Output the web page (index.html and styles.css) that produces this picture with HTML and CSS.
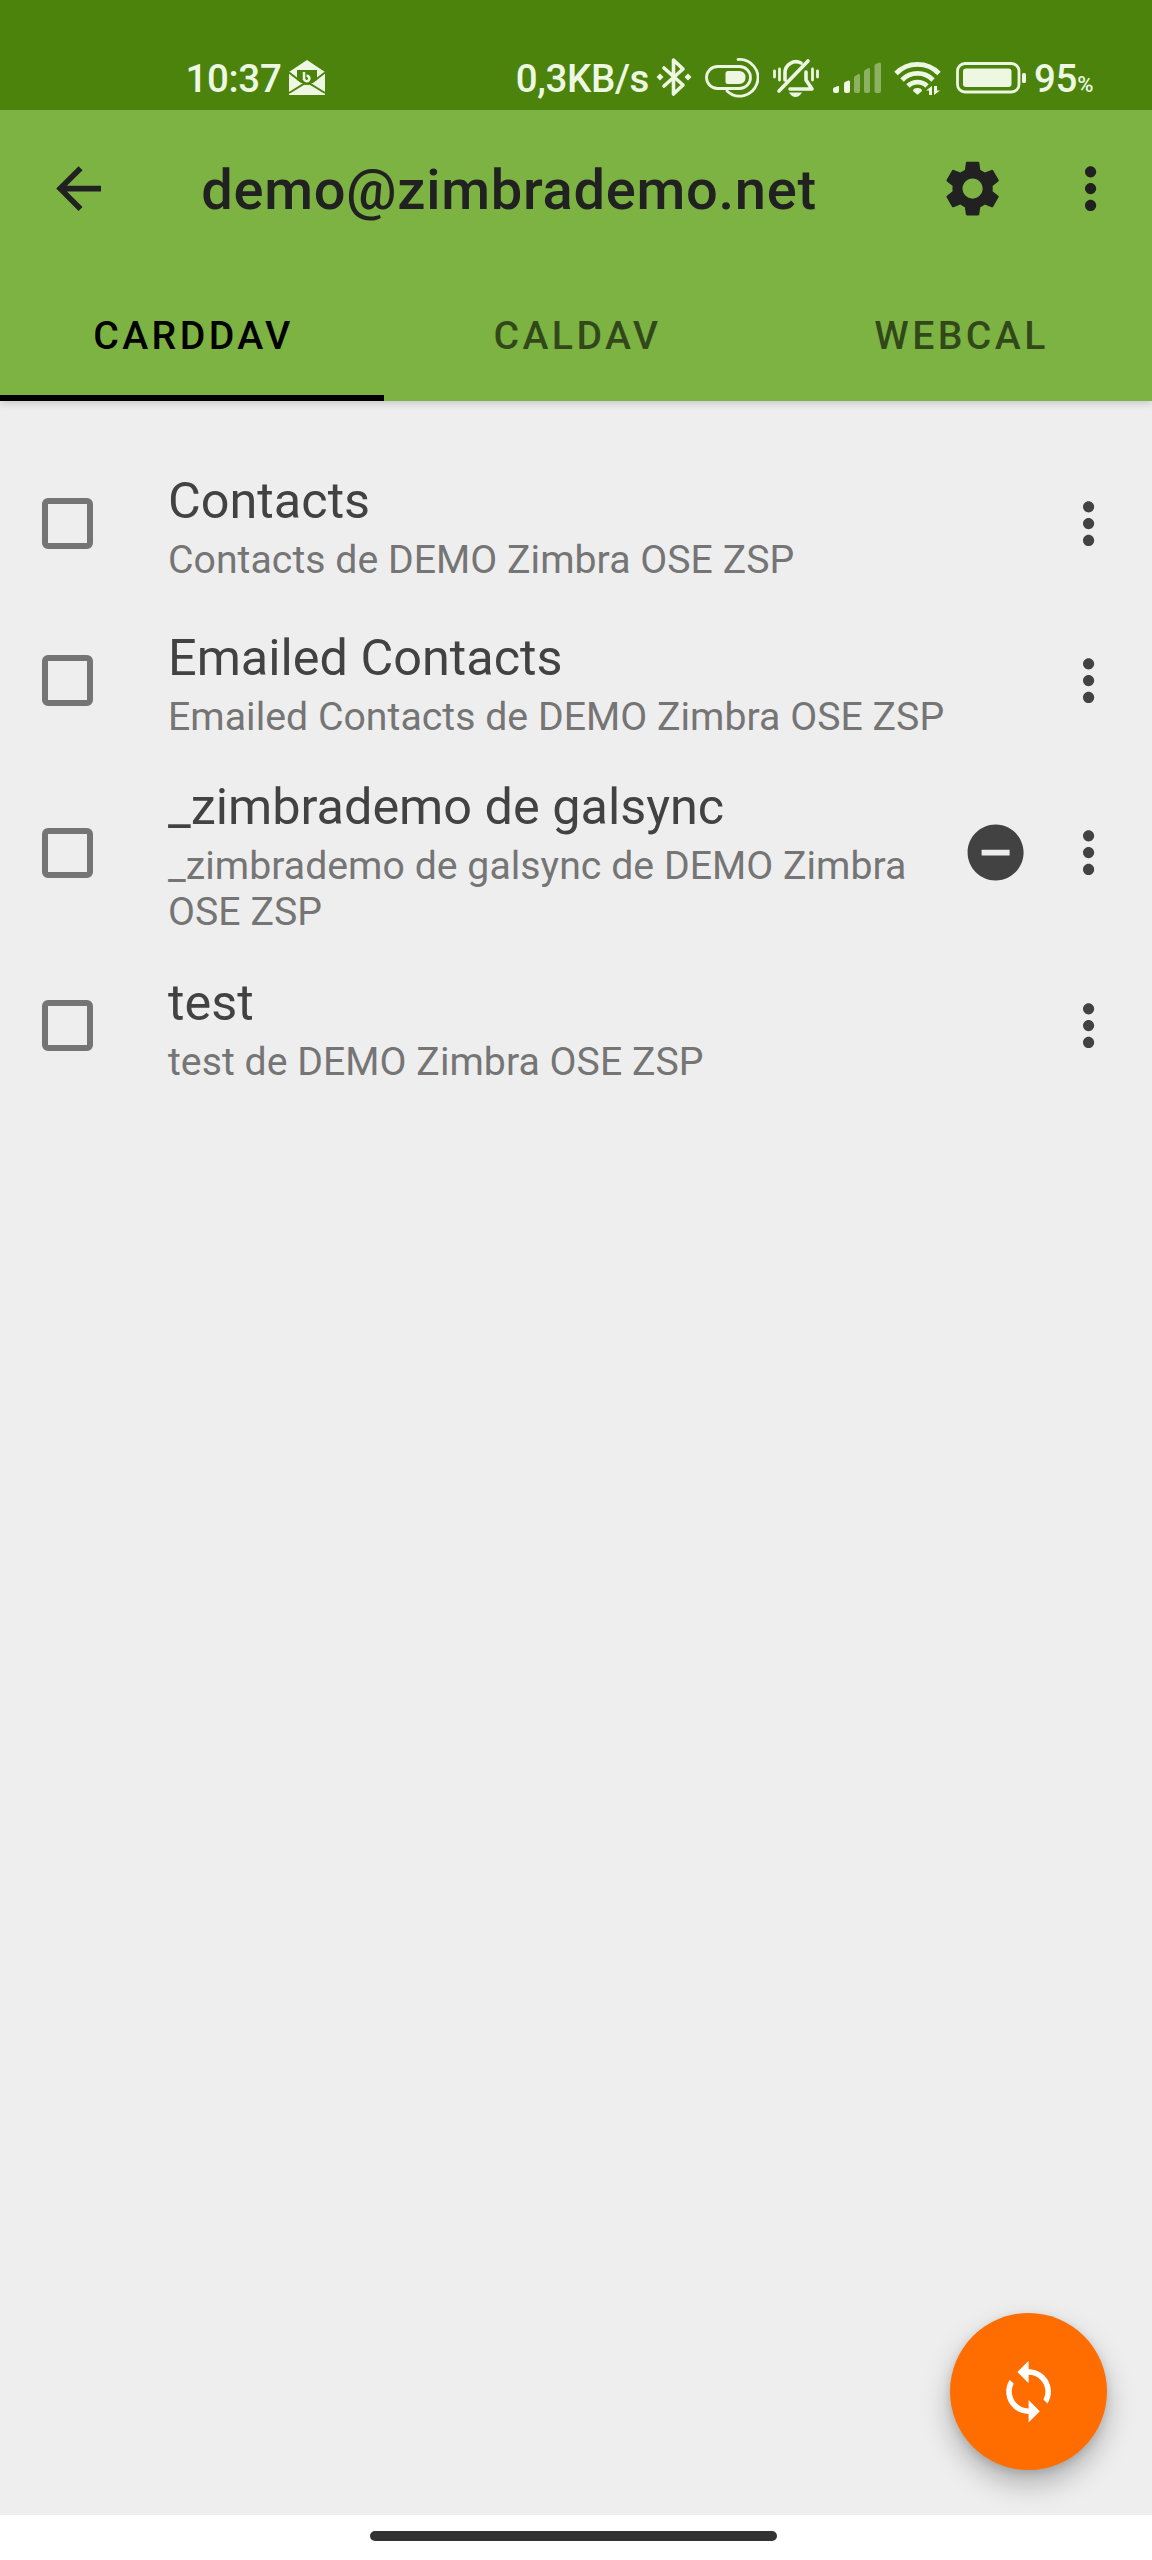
FILE: index.html
```html
<!DOCTYPE html>
<html lang="en">
<head>
  <meta charset="UTF-8">
  <meta name="viewport" content="width=device-width, initial-scale=1.0">
  <title>demo@zimbrademo.net</title>
  <link rel="stylesheet" href="styles.css">
</head>
<body>
  <!-- Status bar -->
  <div class="status-bar">
    <div class="status-left">
      <span class="status-time">10:37</span>
      <svg class="icon-mail" width="38" height="36" viewBox="0 0 38 36" fill="currentColor">
        <path d="M19 0L37 12V35H1V12Z"/>
        <path class="cut" d="M9 10H29V20L19 26L9 20Z"/>
        <path class="cut-line" d="M1 12.500L14 22.500M37 12.500L24 22.500M1 33L19 22L37 33"/>
        <path d="M7 34L19 24.500L31 34Z"/>
        <path class="letter-mark" d="M16 12V20M16 18.500A2.700 2.700 0 1 0 18.500 15.800"/>
      </svg>
    </div>
    <div class="status-right">
      <span class="status-speed">0,3KB/s</span>
      <svg class="icon-bluetooth" width="36" height="40" viewBox="0 0 36 40">
        <path class="line" d="M8 11L27 28L17.500 37V3L27 12L8 29"/>
        <path d="M4 16.500L7.500 20L4 23.500L0.500 20ZM32 16.500L35.500 20L32 23.500L28.500 20Z" fill="currentColor"/>
      </svg>
      <svg class="icon-toggle" width="54" height="40" viewBox="0 0 54 40">
        <rect class="thin" x="1.500" y="8.500" width="44" height="22" rx="11"/>
        <path class="thin" d="M33 1.500A18.300 18.300 0 1 1 22 33"/>
        <path d="M23 13H34Q40.500 13 40.500 19.500T34 26H23Q20.500 26 20.500 23.500V15.500Q20.500 13 23 13Z" fill="currentColor"/>
      </svg>
      <svg class="icon-bell" width="46" height="40" viewBox="0 0 46 40">
        <path class="line" d="M12 22V15A11 11 0 0 1 28 5M33 14V22L39 31H17M6 33L35 3"/>
        <path class="thin" d="M1.500 13V19M6.500 11V22M39.500 11V22M44.500 13V19"/>
        <path d="M16 34.500H29Q26 39 22.500 39T16 34.500Z" fill="currentColor"/>
      </svg>
      <svg class="icon-signal" width="50" height="32" viewBox="0 0 50 32" fill="currentColor">
        <path d="M1 27Q1 26 2 25.500L6 24Q7 23.500 7 25V29Q7 31 5 31H3Q1 31 1 29ZM12 22Q12 20.500 13 20L16.500 18.500Q18 18 18 20V29Q18 31 16 31H14Q12 31 12 29Z"/>
        <path class="faded" d="M22 16Q22 14.500 23 14L26.500 12Q28 11.500 28 13.500V29Q28 31 26 31H24Q22 31 22 29ZM32 10Q32 8.500 33 8L36.500 6Q38 5.500 38 7.500V29Q38 31 36 31H34Q32 31 32 29ZM42.500 4Q42.500 2.500 43.500 2L47.500 0.500Q49 0 49 2V29Q49 31 47 31H44.500Q42.500 31 42.500 29Z"/>
      </svg>
      <svg class="icon-wifi" width="48" height="36" viewBox="0 0 48 36">
        <path class="wave" d="M2 13.500A30 30 0 0 1 45 13.500M8 20A21.500 21.500 0 0 1 39 20M14 26A13.500 13.500 0 0 1 33 26"/>
        <path d="M19 31Q19 28 23.500 28T28 31L24.500 34Q23.500 35 22.500 34Z" fill="currentColor"/>
        <path d="M32 30.500L38 26V35H35V30.500ZM40 26V35L46 30.500H43V26Z" fill="currentColor"/>
      </svg>
      <svg class="icon-battery" width="72" height="32" viewBox="0 0 72 32">
        <rect class="thin" x="1.500" y="1.500" width="61.500" height="28.500" rx="7.500"/>
        <rect x="7" y="6.500" width="48.500" height="18.500" rx="3" fill="currentColor"/>
        <rect x="66" y="11" width="4" height="10" rx="1.500" fill="currentColor"/>
      </svg>
      <span class="status-battery">95<small>%</small></span>
    </div>
  </div>

  <!-- Toolbar and tabs -->
  <header class="app-bar">
    <div class="toolbar">
      <svg class="icon back" viewBox="0 0 24 24"><path d="M20 11H7.830l5.590-5.590L12 4l-8 8 8 8 1.410-1.410L7.830 13H20v-2z"/></svg>
      <h1 class="toolbar-title">demo@zimbrademo.net</h1>
      <svg class="icon settings" viewBox="0 0 24 24"><path d="M19.140 12.940c.04-.3.06-.61.06-.94 0-.32-.02-.64-.07-.94l2.030-1.580c.18-.14.23-.41.12-.61l-1.920-3.320c-.12-.22-.37-.29-.59-.22l-2.390.96c-.5-.38-1.030-.7-1.620-.94l-.36-2.540c-.04-.24-.24-.41-.48-.41h-3.840c-.24 0-.43.17-.47.41l-.36 2.540c-.59.24-1.130.57-1.620.94l-2.390-.96c-.22-.08-.47 0-.59.22L2.740 8.870c-.12.21-.08.47.12.61l2.030 1.580c-.05.3-.09.63-.09.94s.02.64.07.94l-2.030 1.580c-.18.14-.23.41-.12.61l1.920 3.320c.12.22.37.29.59.22l2.390-.96c.5.38 1.030.7 1.620.94l.36 2.540c.05.24.24.41.48.41h3.840c.24 0 .44-.17.47-.41l.36-2.540c.59-.24 1.130-.56 1.620-.94l2.390.96c.22.08.47 0 .59-.22l1.920-3.320c.12-.22.07-.47-.12-.61l-2.010-1.580zM12 15.600c-1.980 0-3.600-1.620-3.600-3.600s1.620-3.600 3.600-3.600 3.600 1.620 3.600 3.600-1.620 3.600-3.600 3.600z"/></svg>
      <svg class="icon more" viewBox="0 0 24 24"><path d="M12 8c1.100 0 2-.9 2-2s-.9-2-2-2-2 .9-2 2 .9 2 2 2zm0 2c-1.100 0-2 .9-2 2s.9 2 2 2 2-.9 2-2-.9-2-2-2zm0 6c-1.100 0-2 .9-2 2s.9 2 2 2 2-.9 2-2-.9-2-2-2z"/></svg>
    </div>
    <nav class="tabs">
      <a class="tab active">CARDDAV</a>
      <a class="tab">CALDAV</a>
      <a class="tab">WEBCAL</a>
    </nav>
  </header>

  <!-- Address books -->
  <main class="content">
    <ul class="collections">
      <li class="collection">
        <input type="checkbox" class="sync-check">
        <div class="collection-text">
          <h2>Contacts</h2>
          <p>Contacts de DEMO Zimbra OSE ZSP</p>
        </div>
        <svg class="icon" viewBox="0 0 24 24"><path d="M12 8c1.100 0 2-.9 2-2s-.9-2-2-2-2 .9-2 2 .9 2 2 2zm0 2c-1.100 0-2 .9-2 2s.9 2 2 2 2-.9 2-2-.9-2-2-2zm0 6c-1.100 0-2 .9-2 2s.9 2 2 2 2-.9 2-2-.9-2-2-2z"/></svg>
      </li>
      <li class="collection">
        <input type="checkbox" class="sync-check">
        <div class="collection-text">
          <h2>Emailed Contacts</h2>
          <p>Emailed Contacts de DEMO Zimbra OSE ZSP</p>
        </div>
        <svg class="icon" viewBox="0 0 24 24"><path d="M12 8c1.100 0 2-.9 2-2s-.9-2-2-2-2 .9-2 2 .9 2 2 2zm0 2c-1.100 0-2 .9-2 2s.9 2 2 2 2-.9 2-2-.9-2-2-2zm0 6c-1.100 0-2 .9-2 2s.9 2 2 2 2-.9 2-2-.9-2-2-2z"/></svg>
      </li>
      <li class="collection">
        <input type="checkbox" class="sync-check">
        <div class="collection-text">
          <h2>_zimbrademo de galsync</h2>
          <p>_zimbrademo de galsync de DEMO Zimbra OSE ZSP</p>
        </div>
        <svg class="icon read-only" viewBox="0 0 24 24"><path d="M12 2C6.480 2 2 6.480 2 12s4.480 10 10 10 10-4.480 10-10S17.520 2 12 2zm5 11H7v-2h10v2z"/></svg>
        <svg class="icon" viewBox="0 0 24 24"><path d="M12 8c1.100 0 2-.9 2-2s-.9-2-2-2-2 .9-2 2 .9 2 2 2zm0 2c-1.100 0-2 .9-2 2s.9 2 2 2 2-.9 2-2-.9-2-2-2zm0 6c-1.100 0-2 .9-2 2s.9 2 2 2 2-.9 2-2-.9-2-2-2z"/></svg>
      </li>
      <li class="collection">
        <input type="checkbox" class="sync-check">
        <div class="collection-text">
          <h2>test</h2>
          <p>test de DEMO Zimbra OSE ZSP</p>
        </div>
        <svg class="icon" viewBox="0 0 24 24"><path d="M12 8c1.100 0 2-.9 2-2s-.9-2-2-2-2 .9-2 2 .9 2 2 2zm0 2c-1.100 0-2 .9-2 2s.9 2 2 2 2-.9 2-2-.9-2-2-2zm0 6c-1.100 0-2 .9-2 2s.9 2 2 2 2-.9 2-2-.9-2-2-2z"/></svg>
      </li>
    </ul>

    <button class="fab" aria-label="Synchronize">
      <svg class="icon" viewBox="0 0 24 24"><path d="M12 4V1L8 5l4 4V6c3.310 0 6 2.690 6 6 0 1.010-.25 1.970-.7 2.800l1.460 1.460C19.540 15.030 20 13.570 20 12c0-4.420-3.580-8-8-8zm0 14c-3.310 0-6-2.690-6-6 0-1.010.25-1.970.7-2.800L5.240 7.740C4.460 8.970 4 10.430 4 12c0 4.420 3.580 8 8 8v3l4-4-4-4v3z"/></svg>
    </button>
  </main>

  <!-- Gesture navigation -->
  <div class="nav-bar">
    <div class="nav-handle"></div>
  </div>
</body>
</html>
```
FILE: styles.css
```css
* {
  box-sizing: border-box;
}

body {
  margin: 0;
  width: 1152px;
  height: 2560px;
  display: flex;
  flex-direction: column;
  font-family: Roboto, sans-serif;
  background-color: #eeeeee;
}

h1, h2, p, ul {
  margin: 0;
  padding: 0;
}

svg {
  display: block;
  flex: none;
}

.icon {
  width: 67.2px;
  height: 67.2px;
  fill: currentColor;
}

/* Status bar */
.status-bar {
  position: relative;
  z-index: 1;
  height: 110px;
  padding: 46px 59px 0 185.500px;
  display: flex;
  justify-content: space-between;
  background-color: #4b830d;
  color: #eef7e2;
  font-size: 38.500px;
  font-weight: 500;
  line-height: 66px;
}

.status-left,
.status-right {
  height: 64px;
  display: flex;
  align-items: flex-start;
}

.status-time,
.status-speed {
  letter-spacing: -0.350px;
}

.status-bar .line {
  fill: none;
  stroke: currentColor;
  stroke-width: 3.600;
  stroke-linejoin: round;
  stroke-linecap: round;
}

.status-bar .thin {
  fill: none;
  stroke: currentColor;
  stroke-width: 2.800;
  stroke-linecap: round;
}

.status-bar .wave {
  fill: none;
  stroke: currentColor;
  stroke-width: 4.800;
}

.status-bar .faded {
  opacity: 0.4;
}

.status-bar .cut {
  fill: #4b830d;
}

.status-bar .cut-line {
  fill: none;
  stroke: #4b830d;
  stroke-width: 2;
}

.status-bar .letter-mark {
  fill: none;
  stroke: currentColor;
  stroke-width: 2.500;
}

.icon-mail {
  margin: 14px 0 0 7px;
}

.icon-bluetooth {
  margin: 11px 0 0 7px;
}

.icon-toggle {
  margin: 12px 0 0 13px;
}

.icon-bell {
  margin: 12px 0 0 14px;
}

.icon-signal {
  margin: 16px 0 0 13px;
}

.icon-wifi {
  margin: 14px 0 0 12px;
}

.icon-battery {
  margin: 16px 0 0 14px;
}

.status-battery {
  margin-left: 6px;
  letter-spacing: -0.350px;
}

.status-battery small {
  font-size: 22px;
}

/* Toolbar and tabs */
.app-bar {
  height: 291px;
  background-color: #7cb342;
  color: #212121;
  box-shadow: 0 2px 8px rgba(0, 0, 0, 0.18);
}

.toolbar {
  height: 157px;
  padding: 0 28px 0 45px;
  display: flex;
  align-items: center;
}

.toolbar-title {
  flex: 1;
  margin-left: 89px;
  padding-top: 3px;
  font-size: 56px;
  font-weight: 500;
  letter-spacing: 0.750px;
  line-height: 66px;
}

.settings {
  margin-right: 51px;
}

.tabs {
  height: 134px;
  display: flex;
}

.tab {
  flex: 1;
  padding: 9px 0 0 3px;
  border-bottom: 6px solid transparent;
  display: flex;
  align-items: center;
  justify-content: center;
  font-size: 39.200px;
  font-weight: 500;
  letter-spacing: 3.400px;
  color: rgba(0, 0, 0, 0.6);
}

.tab.active {
  color: #000000;
  border-bottom-color: #000000;
}

/* Address books */
.content {
  flex: 1;
  padding-top: 44px;
  display: flex;
  flex-direction: column;
  justify-content: space-between;
}

.collections {
  list-style: none;
}

.collection {
  min-height: 157px;
  padding: 12px 30px 12px 42px;
  display: flex;
  align-items: center;
  color: #424242;
}

.sync-check {
  appearance: none;
  flex: none;
  width: 50.500px;
  height: 50.500px;
  margin: 0;
  border: 6px solid #757575;
  border-radius: 6px;
}

.collection-text {
  flex: 1;
  margin-left: 75.500px;
  padding-top: 6px;
}

.collection-text h2 {
  font-size: 50.400px;
  font-weight: 400;
  line-height: 60px;
}

.collection-text p {
  margin-top: 6px;
  font-size: 39.200px;
  letter-spacing: 0.040px;
  line-height: 46px;
  color: #757575;
}

.read-only {
  margin: 0 26px 0 20px;
}

.fab {
  width: 157px;
  height: 157px;
  margin: 0 45px 45px 0;
  padding: 0;
  align-self: flex-end;
  display: flex;
  align-items: center;
  justify-content: center;
  border: none;
  border-radius: 50%;
  background-color: #ff6d00;
  color: #ffffff;
  box-shadow: 0 14px 28px rgba(0, 0, 0, 0.26), 0 3px 8px rgba(0, 0, 0, 0.12);
}

/* Gesture navigation */
.nav-bar {
  height: 45px;
  padding: 16px 5px 0 0;
  display: flex;
  justify-content: center;
  align-items: flex-start;
  background-color: #ffffff;
}

.nav-handle {
  width: 407px;
  height: 10px;
  border-radius: 5px;
  background-color: #333333;
}
```
